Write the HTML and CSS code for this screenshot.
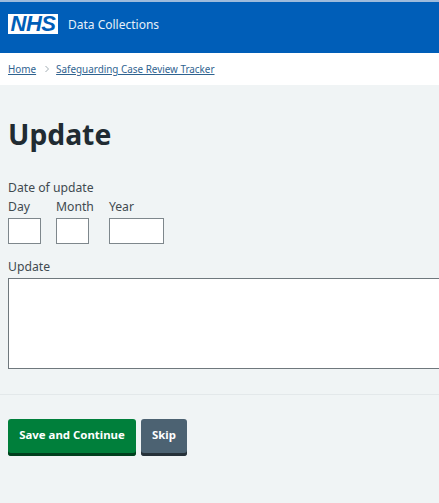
FILE: index.html
```html
<!DOCTYPE html>
<html lang="en">
<head>
  <meta charset="UTF-8" />
  <meta name="viewport" content="width=device-width, initial-scale=1.0"/>
  <title>Update - Data Collections</title>
  <link rel="stylesheet" href="styles.css">
</head>
<body>
  <header class="site-header">
    <span class="nhs-logo">NHS</span>
    <span class="service-name">Data Collections</span>
  </header>

  <nav class="breadcrumb">
    <a href="#">Home</a>
    <svg class="chevron" width="6" height="8" viewBox="0 0 6 8" aria-hidden="true"><path d="M1.5 1l3 3-3 3" fill="none" stroke="#a3aeb4" stroke-width="1"/></svg>
    <a href="#">Safeguarding Case Review Tracker</a>
  </nav>

  <main class="content">
    <h1>Update</h1>

    <div class="legend">Date of update</div>
    <div class="date-row">
      <div class="date-item"><label for="day">Day</label><input type="text" id="day" class="input-day"/></div>
      <div class="date-item"><label for="month">Month</label><input type="text" id="month" class="input-day"/></div>
      <div class="date-item"><label for="year">Year</label><input type="text" id="year" class="input-year"/></div>
    </div>

    <label class="update-label" for="update">Update</label>
    <textarea id="update" class="update-box"></textarea>

    <hr class="divider"/>

    <div class="actions">
      <button class="btn btn-save">Save and Continue</button>
      <button class="btn btn-skip">Skip</button>
    </div>
  </main>
</body>
</html>
```

FILE: styles.css
```css
html, body {
  margin: 0;
  height: 503px;
  overflow: hidden;
}
body {
  font-family: "Noto Sans", "Open Sans", sans-serif;
  background-color: #f0f4f5;
  color: #3f4a50;
}
.site-header {
  display: flex;
  align-items: center;
  gap: 10px;
  height: 51px;
  margin-top: 2px;
  padding: 0 8px 7px;
  box-sizing: border-box;
  background-color: #005eb8;
  box-shadow: 0 -2px 0 #9dbbdc;
}
.nhs-logo {
  display: block;
  width: 50px;
  height: 20px;
  background-color: #fff;
  color: #005eb8;
  font-family: "Liberation Sans", Arial, sans-serif;
  font-size: 22px;
  font-weight: bold;
  font-style: italic;
  line-height: 20px;
  text-align: center;
  letter-spacing: -0.5px;
}
.service-name {
  color: #e6f0f9;
  font-size: 12px;
}
.breadcrumb {
  display: flex;
  align-items: center;
  gap: 6px;
  height: 32px;
  padding: 0 8px;
  background-color: #fff;
  font-size: 9.9px;
}
.breadcrumb a {
  color: #2f6390;
}
.chevron {
  margin: 0 0 0 2px;
}
.content {
  padding: 0 0 0 8px;
}
h1 {
  margin: 0;
  padding-top: 30px;
  color: #212b32;
  font-size: 28.3px;
  line-height: 38px;
  font-weight: bold;
}
.legend {
  margin-top: 27px;
  font-size: 12.2px;
  line-height: 16px;
}
.date-row {
  display: flex;
  gap: 15px;
  margin-top: 3px;
}
.date-item {
  display: flex;
  flex-direction: column;
}
label {
  font-size: 12.2px;
  line-height: 16px;
}
input[type="text"] {
  box-sizing: border-box;
  height: 26px;
  margin-top: 3px;
  padding: 0 4px;
  border: 1px solid #7e878c;
  border-radius: 0;
  background-color: #fff;
}
.input-day {
  width: 33px;
}
.input-year {
  width: 55px;
}
.update-label {
  display: block;
  margin-top: 15px;
}
.update-box {
  display: block;
  box-sizing: border-box;
  width: 100%;
  height: 91px;
  margin-top: 3px;
  border: 1px solid #6f787d;
  border-right: none;
  border-radius: 0;
  background-color: #fff;
  resize: none;
}
.divider {
  height: 1px;
  margin: 25px 0 24px -8px;
  border: 0;
  background-color: #e3e8ea;
}
.actions {
  display: flex;
  gap: 5px;
}
.btn {
  height: 37px;
  padding: 0 0 6px;
  border: none;
  border-radius: 3px;
  color: #fff;
  font-family: inherit;
  font-size: 11.4px;
  font-weight: bold;
  cursor: pointer;
}
.btn-save {
  width: 128px;
  background-color: #007f3b;
  box-shadow: inset 0 -3px 0 #00401e;
}
.btn-skip {
  width: 46px;
  background-color: #4c6272;
  box-shadow: inset 0 -3px 0 #263139;
}
```
